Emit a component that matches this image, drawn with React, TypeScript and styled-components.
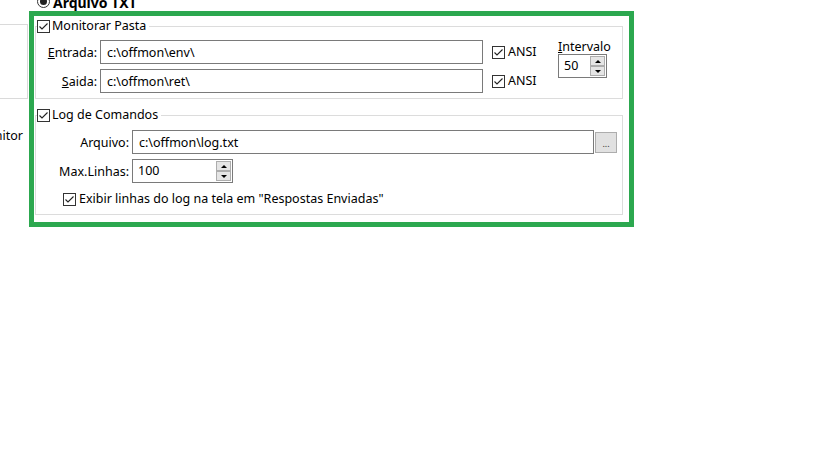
import React from 'react';
import styled, { createGlobalStyle } from 'styled-components';

const GlobalStyle = createGlobalStyle`
  html, body {
    margin: 0;
    padding: 0;
    background: #fff;
  }
  body {
    font-family: "Noto Sans", "Open Sans", sans-serif;
    font-size: 12.5px;
    color: #000;
  }
  * {
    box-sizing: border-box;
  }
`;

const Page = styled.div`
  width: 819px;
  height: 460px;
  overflow: hidden;
  display: flex;
  flex-direction: column;
  background: #fff;
`;

const Header = styled.div`
  display: flex;
  align-items: center;
  height: 16px;
  margin: -5px 0 0 37px;
  font-size: 14px;
  font-weight: 700;
  line-height: 16px;
`;

const Radio = styled.span`
  width: 13px;
  height: 13px;
  margin: 0 3px 4px 0;
  border: 1px solid #333;
  border-radius: 50%;
  display: flex;
  align-items: center;
  justify-content: center;

  &::after {
    content: '';
    width: 7px;
    height: 7px;
    border-radius: 50%;
    background: #222;
  }
`;

const Body = styled.div`
  display: flex;
  align-items: flex-start;
`;

const Stub = styled.div`
  width: 29px;
  flex: none;
  display: flex;
  flex-direction: column;
`;

const StubBox = styled.div`
  margin-top: 13px;
  width: 28px;
  height: 75px;
  border: 1px solid #dadada;
  border-left: none;
`;

const StubLabel = styled.div`
  margin-top: 29px;
  padding-right: 6px;
  display: flex;
  justify-content: flex-end;
  white-space: nowrap;
  line-height: 16px;
`;

const Frame = styled.div`
  flex: none;
  width: 605px;
  height: 216px;
  border: 5px solid #2ca84f;
  background: #fff;
  padding: 10px 6px 0 1px;
  display: flex;
  flex-direction: column;
`;

const Group = styled.div<{ $gap?: number }>`
  margin-top: ${(p) => p.$gap ?? 0}px;
  border: 1px solid #dcdcdc;
  display: flex;
  flex-direction: column;
`;

const GroupTitle = styled.div`
  align-self: flex-start;
  display: flex;
  align-items: center;
  gap: 2px;
  height: 16px;
  margin: -9px 0 0 1px;
  padding-right: 3px;
  background: #fff;
  line-height: 16px;
`;

const GroupBody = styled.div<{ $pad: string }>`
  padding: ${(p) => p.$pad};
  display: flex;
  align-items: flex-start;
`;

const Stack = styled.div`
  display: flex;
  flex-direction: column;
  gap: 5px;
`;

const FieldRow = styled.div`
  display: flex;
  align-items: center;
  height: 24px;
`;

const FieldLabel = styled.span<{ $w: number }>`
  width: ${(p) => p.$w}px;
  margin-right: 3px;
  text-align: right;
  white-space: nowrap;
`;

const TextBox = styled.div<{ $w: number }>`
  width: ${(p) => p.$w}px;
  height: 24px;
  border: 1px solid #7a7a7a;
  padding: 0 6px;
  display: flex;
  align-items: center;
  background: #fff;
  white-space: nowrap;
`;

const CheckLine = styled.div<{ $w?: number; $indent?: number }>`
  display: flex;
  align-items: center;
  gap: 3px;
  height: 16px;
  width: ${(p) => (p.$w ? `${p.$w}px` : 'auto')};
  margin-left: ${(p) => p.$indent ?? 0}px;
  line-height: 16px;
  white-space: nowrap;
`;

const IntervalCol = styled.div`
  margin-left: 10px;
  display: flex;
  flex-direction: column;
`;

const IntervalLabel = styled.span`
  line-height: 14px;
  height: 14px;
`;

const Spin = styled.div<{ $w: number }>`
  width: ${(p) => p.$w}px;
  height: 24px;
  border: 1px solid #7a7a7a;
  display: flex;
  background: #fff;
`;

const SpinValue = styled.span`
  flex: 1;
  padding-left: 5px;
  line-height: 22px;
`;

const SpinButtons = styled.div`
  width: 15px;
  margin: 1px;
  display: flex;
  flex-direction: column;
`;

const SpinButton = styled.div<{ $down?: boolean }>`
  flex: 1;
  border: 1px solid #adadad;
  background: #e5e5e5;
  display: flex;
  align-items: center;
  justify-content: center;

  &::after {
    content: '';
    border-left: 3px solid transparent;
    border-right: 3px solid transparent;
    ${(p) => (p.$down ? 'border-top: 3px solid #000;' : 'border-bottom: 3px solid #000;')}
  }
`;

const DotsButton = styled.div`
  width: 22px;
  height: 21px;
  margin-left: 1px;
  border: 1px solid #adadad;
  background: #e1e1e1;
  display: flex;
  align-items: flex-end;
  justify-content: center;
  padding-bottom: 4px;
  font-size: 9px;
  line-height: 9px;
  color: #333;
`;

const LogBody = styled.div`
  padding: 7px 0 7px 0;
  display: flex;
  flex-direction: column;
  gap: 5px;
`;

const CheckRow = styled.div`
  margin-top: 3px;
`;

const CheckBox = () => (
  <svg width="13" height="13" viewBox="0 0 13 13">
    <rect x="0.5" y="0.5" width="12" height="12" fill="#fff" stroke="#333" />
    <path d="M2.5 6.5 L5 9 L10.5 3.5" fill="none" stroke="#222" strokeWidth="1.1" />
  </svg>
);

const SpinBox = ({ value, width }: { value: string; width: number }) => (
  <Spin $w={width}>
    <SpinValue>{value}</SpinValue>
    <SpinButtons>
      <SpinButton />
      <SpinButton $down />
    </SpinButtons>
  </Spin>
);

export default function App() {
  return (
    <>
      <GlobalStyle />
      <Page>
        <Header>
          <Radio />
          Arquivo TXT
        </Header>
        <Body>
          <Stub>
            <StubBox />
            <StubLabel>Monitor</StubLabel>
          </Stub>
          <Frame>
            <Group $gap={0}>
              <GroupTitle>
                <CheckBox />
                Monitorar Pasta
              </GroupTitle>
              <GroupBody $pad="6px 0 5px 0">
                <Stack>
                  <FieldRow>
                    <FieldLabel $w={61}>
                      <u>E</u>ntrada:
                    </FieldLabel>
                    <TextBox $w={383}>c:\offmon\env\</TextBox>
                    <CheckLine $w={56} $indent={9}>
                      <CheckBox />
                      ANSI
                    </CheckLine>
                  </FieldRow>
                  <FieldRow>
                    <FieldLabel $w={61}>
                      <u>S</u>aida:
                    </FieldLabel>
                    <TextBox $w={383}>c:\offmon\ret\</TextBox>
                    <CheckLine $w={56} $indent={9}>
                      <CheckBox />
                      ANSI
                    </CheckLine>
                  </FieldRow>
                </Stack>
                <IntervalCol>
                  <IntervalLabel>
                    <u>I</u>ntervalo
                  </IntervalLabel>
                  <SpinBox value="50" width={49} />
                </IntervalCol>
              </GroupBody>
            </Group>
            <Group $gap={16}>
              <GroupTitle>
                <CheckBox />
                Log de Comandos
              </GroupTitle>
              <LogBody>
                <FieldRow>
                  <FieldLabel $w={93}>Arquivo:</FieldLabel>
                  <TextBox $w={462}>c:\offmon\log.txt</TextBox>
                  <DotsButton>...</DotsButton>
                </FieldRow>
                <FieldRow>
                  <FieldLabel $w={93}>Max.Linhas:</FieldLabel>
                  <SpinBox value="100" width={101} />
                </FieldRow>
                <CheckRow>
                  <CheckLine $indent={27}>
                    <CheckBox />
                    Exibir linhas do log na tela em "Respostas Enviadas"
                  </CheckLine>
                </CheckRow>
              </LogBody>
            </Group>
          </Frame>
        </Body>
      </Page>
    </>
  );
}
